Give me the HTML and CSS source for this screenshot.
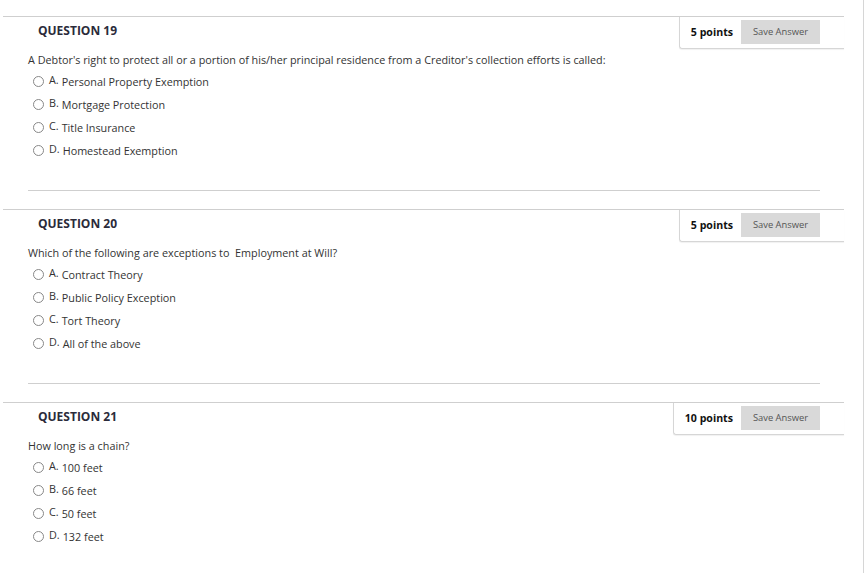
FILE: index.html
```html
<!DOCTYPE html>
<html lang="en">
<head>
    <meta charset="UTF-8">
    <title>Test</title>
    <link rel="stylesheet" href="styles.css">
</head>
<body>
    <div class="page">
        <div class="question">
            <div class="q-header">
                <h3 class="q-title">QUESTION 19</h3>
                <div class="points-box">
                    <span class="points">5 points</span>
                    <button class="save-btn">Save Answer</button>
                </div>
            </div>
            <div class="q-body">
                <p class="q-text">A Debtor's right to protect all or a portion of his/her principal residence from a Creditor's collection efforts is called:</p>
                <ul class="options">
                    <li><span class="radio"></span><span class="letter">A.</span> Personal Property Exemption</li>
                    <li><span class="radio"></span><span class="letter">B.</span> Mortgage Protection</li>
                    <li><span class="radio"></span><span class="letter">C.</span> Title Insurance</li>
                    <li><span class="radio"></span><span class="letter">D.</span> Homestead Exemption</li>
                </ul>
            </div>
        </div>

        <div class="question">
            <div class="q-header">
                <h3 class="q-title">QUESTION 20</h3>
                <div class="points-box">
                    <span class="points">5 points</span>
                    <button class="save-btn">Save Answer</button>
                </div>
            </div>
            <div class="q-body">
                <p class="q-text">Which of the following are exceptions to&nbsp; Employment at Will?</p>
                <ul class="options">
                    <li><span class="radio"></span><span class="letter">A.</span> Contract Theory</li>
                    <li><span class="radio"></span><span class="letter">B.</span> Public Policy Exception</li>
                    <li><span class="radio"></span><span class="letter">C.</span> Tort Theory</li>
                    <li><span class="radio"></span><span class="letter">D.</span> All of the above</li>
                </ul>
            </div>
        </div>

        <div class="question">
            <div class="q-header">
                <h3 class="q-title">QUESTION 21</h3>
                <div class="points-box">
                    <span class="points">10 points</span>
                    <button class="save-btn">Save Answer</button>
                </div>
            </div>
            <div class="q-body">
                <p class="q-text">How long is a chain?</p>
                <ul class="options">
                    <li><span class="radio"></span><span class="letter">A.</span> 100 feet</li>
                    <li><span class="radio"></span><span class="letter">B.</span> 66 feet</li>
                    <li><span class="radio"></span><span class="letter">C.</span> 50 feet</li>
                    <li><span class="radio"></span><span class="letter">D.</span> 132 feet</li>
                </ul>
            </div>
        </div>
    </div>
</body>
</html>
```

FILE: styles.css
```css
body {
    font-family: "Open Sans", Arial, sans-serif;
    margin: 0;
    padding: 0;
    background-color: #fff;
    color: #333;
}
.page {
    width: 864px;
    min-height: 100vh;
    border-right: 1px solid #d6d6d6;
    padding-top: 16px;
    box-sizing: border-box;
}
.question {
    margin: 0 19px 18px 3px;
    border-top: 1px solid #cfcfcf;
}
.q-header {
    display: flex;
    justify-content: space-between;
    align-items: flex-start;
}
.q-title {
    margin: 0;
    padding: 5px 0 0 35px;
    font-size: 12px;
    font-weight: bold;
    color: #2b2b3a;
}
.points-box {
    display: flex;
    align-items: center;
    gap: 8px;
    height: 32px;
    padding: 0 24px 2px 11px;
    box-sizing: border-box;
    border-left: 1px solid #d6d6d6;
    border-bottom: 1px solid #d6d6d6;
    border-bottom-left-radius: 3px;
    box-shadow: 0 1px 1px rgba(0,0,0,0.06);
}
.points {
    font-size: 10.6px;
    font-weight: bold;
    color: #111;
}
.save-btn {
    width: 79px;
    height: 24px;
    border: none;
    background-color: #d9d9d9;
    color: #555;
    font-family: "Open Sans", Arial, sans-serif;
    font-size: 9.4px;
    padding: 0;
}
.q-body {
    margin-left: 25px;
    margin-right: 24px;
    padding: 3px 0 28px;
    border-bottom: 1px solid #cfcfcf;
}
.q-text {
    margin: 0;
    font-size: 10.8px;
    line-height: 16px;
}
.options {
    list-style: none;
    margin: 2px 0 0;
    padding: 0;
}
.options li {
    display: flex;
    align-items: center;
    height: 23px;
    padding-left: 5px;
    font-size: 10.8px;
}
.radio {
    width: 9px;
    height: 9px;
    border: 1px solid #888;
    border-radius: 50%;
    margin-right: 5px;
    flex-shrink: 0;
}
.letter {
    margin-top: -4px;
    margin-right: 3px;
}
```
